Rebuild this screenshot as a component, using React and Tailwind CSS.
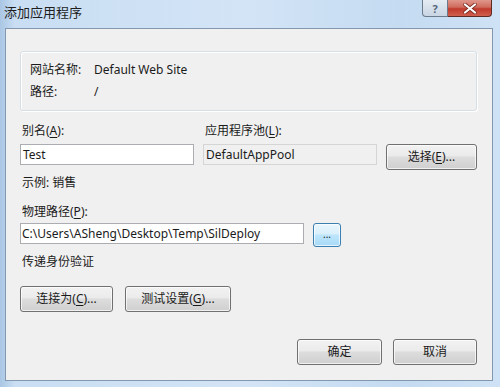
import React from 'react'

const font = { fontFamily: '"Noto Sans", "Noto Sans CJK SC", sans-serif' }

const Btn = ({ children, w, h = 'h-[26px]', focus }) => (
  <div
    className={`${w} ${h} flex items-center justify-center rounded-[3px] border text-[12px] text-[#1b1b1b] ${
      focus
        ? 'border-[#3c7fb1] bg-[linear-gradient(#eaf6fd_0%,#d9f0fc_45%,#bee6fd_50%,#a7d9f5_100%)]'
        : 'border-[#707070] bg-[linear-gradient(#f2f2f2_0%,#ebebeb_45%,#dddddd_50%,#cfcfcf_100%)]'
    } shadow-[inset_0_0_0_1px_rgba(255,255,255,0.7)]`}
  >
    {children}
  </div>
)

const U = ({ children }) => <span className="underline underline-offset-2">{children}</span>

const App = () => {
  return (
    <div
      className="w-[500px] h-[387px] flex flex-col overflow-hidden bg-[linear-gradient(90deg,#a9c6e4_0%,#c9def3_3%,#d3e4f6_50%,#c4dbf1_80%,#cfe2f5_100%)]"
      style={font}
    >
      {/* title bar */}
      <div className="h-[28px] flex items-start justify-between shrink-0">
        <div className="pl-[4px] pt-[3px] text-[13px] leading-[18px] text-[#1e1e1e]">添加应用程序</div>
        <div className="flex mr-[8px]">
          <div className="w-[26px] h-[17px] border border-t-0 border-[#6b7a8c] rounded-bl-[4px] bg-[linear-gradient(#e4ebf3,#c9d5e3)] flex items-center justify-center text-[11px] font-bold text-[#58677a] leading-none">
            ?
          </div>
          <div className="w-[44px] h-[17px] border border-t-0 border-l-0 border-[#5e2a24] rounded-br-[4px] bg-[linear-gradient(#e0978d_0%,#cf6a5c_45%,#c0392b_55%,#d0604f_100%)] flex items-center justify-center">
            <svg width="14" height="11" viewBox="0 0 14 11">
              <path d="M2 1.5 L12 9.5 M12 1.5 L2 9.5" stroke="#7a2a22" strokeWidth="3.6" strokeLinecap="round" />
              <path d="M2 1.5 L12 9.5 M12 1.5 L2 9.5" stroke="#ffffff" strokeWidth="2.2" strokeLinecap="round" />
            </svg>
          </div>
        </div>
      </div>

      {/* client area */}
      <div className="ml-[5px] w-[488px] h-[353px] border border-[#8397ae] bg-[#f0f0f0] pl-[14px] pr-[15px] pt-[22px] text-[12px] leading-[16px] text-[#1b1b1b]">
        {/* group box */}
        <div className="h-[60px] rounded-[3px] border border-[#d5dfe5] shadow-[inset_1px_1px_0_#ffffff,1px_1px_0_#ffffff] pl-[9px] pt-[10px]">
          <div className="flex">
            <span className="w-[64px]">网站名称:</span>
            <span>Default Web Site</span>
          </div>
          <div className="flex mt-[6px]">
            <span className="w-[64px]">路径:</span>
            <span>/</span>
          </div>
        </div>

        {/* alias / pool */}
        <div className="flex mt-[12px] h-[16px]">
          <span className="w-[183px] pl-[2px]">
            别名(<U>A</U>):
          </span>
          <span className="pl-[2px]">
            应用程序池(<U>L</U>):
          </span>
        </div>
        <div className="flex items-start mt-[5px] gap-[9px]">
          <div className="w-[174px] h-[21px] border border-[#abadb3] bg-white pl-[2px] flex items-center">Test</div>
          <div className="w-[174px] h-[21px] border border-[#d5d5d5] bg-[#f0f0f0] pl-[2px] flex items-center">
            DefaultAppPool
          </div>
          <Btn w="w-[91px]">
            选择(<U>E</U>)...
          </Btn>
        </div>

        <div className="mt-[5px] pl-[2px]">示例: 销售</div>

        <div className="mt-[13px] pl-[2px]">
          物理路径(<U>P</U>):
        </div>
        <div className="flex items-start mt-[3px] gap-[9px]">
          <div className="w-[284px] h-[21px] border border-[#abadb3] bg-white pl-[1px] flex items-center">
            C:\Users\ASheng\Desktop\Temp\SilDeploy
          </div>
          <Btn w="w-[28px]" h="h-[24px]" focus>
            <span className="text-[10px] leading-none -mt-[3px]">...</span>
          </Btn>
        </div>

        <div className="mt-[7px] pl-[2px]">传递身份验证</div>

        <div className="flex gap-[12px] mt-[16px]">
          <Btn w="w-[93px]">
            连接为(<U>C</U>)...
          </Btn>
          <Btn w="w-[106px]">
            测试设置(<U>G</U>)...
          </Btn>
        </div>

        <div className="flex justify-end gap-[11px] mt-[27px]">
          <Btn w="w-[85px]">确定</Btn>
          <Btn w="w-[84px]">取消</Btn>
        </div>
      </div>
    </div>
  )
}

export default App
